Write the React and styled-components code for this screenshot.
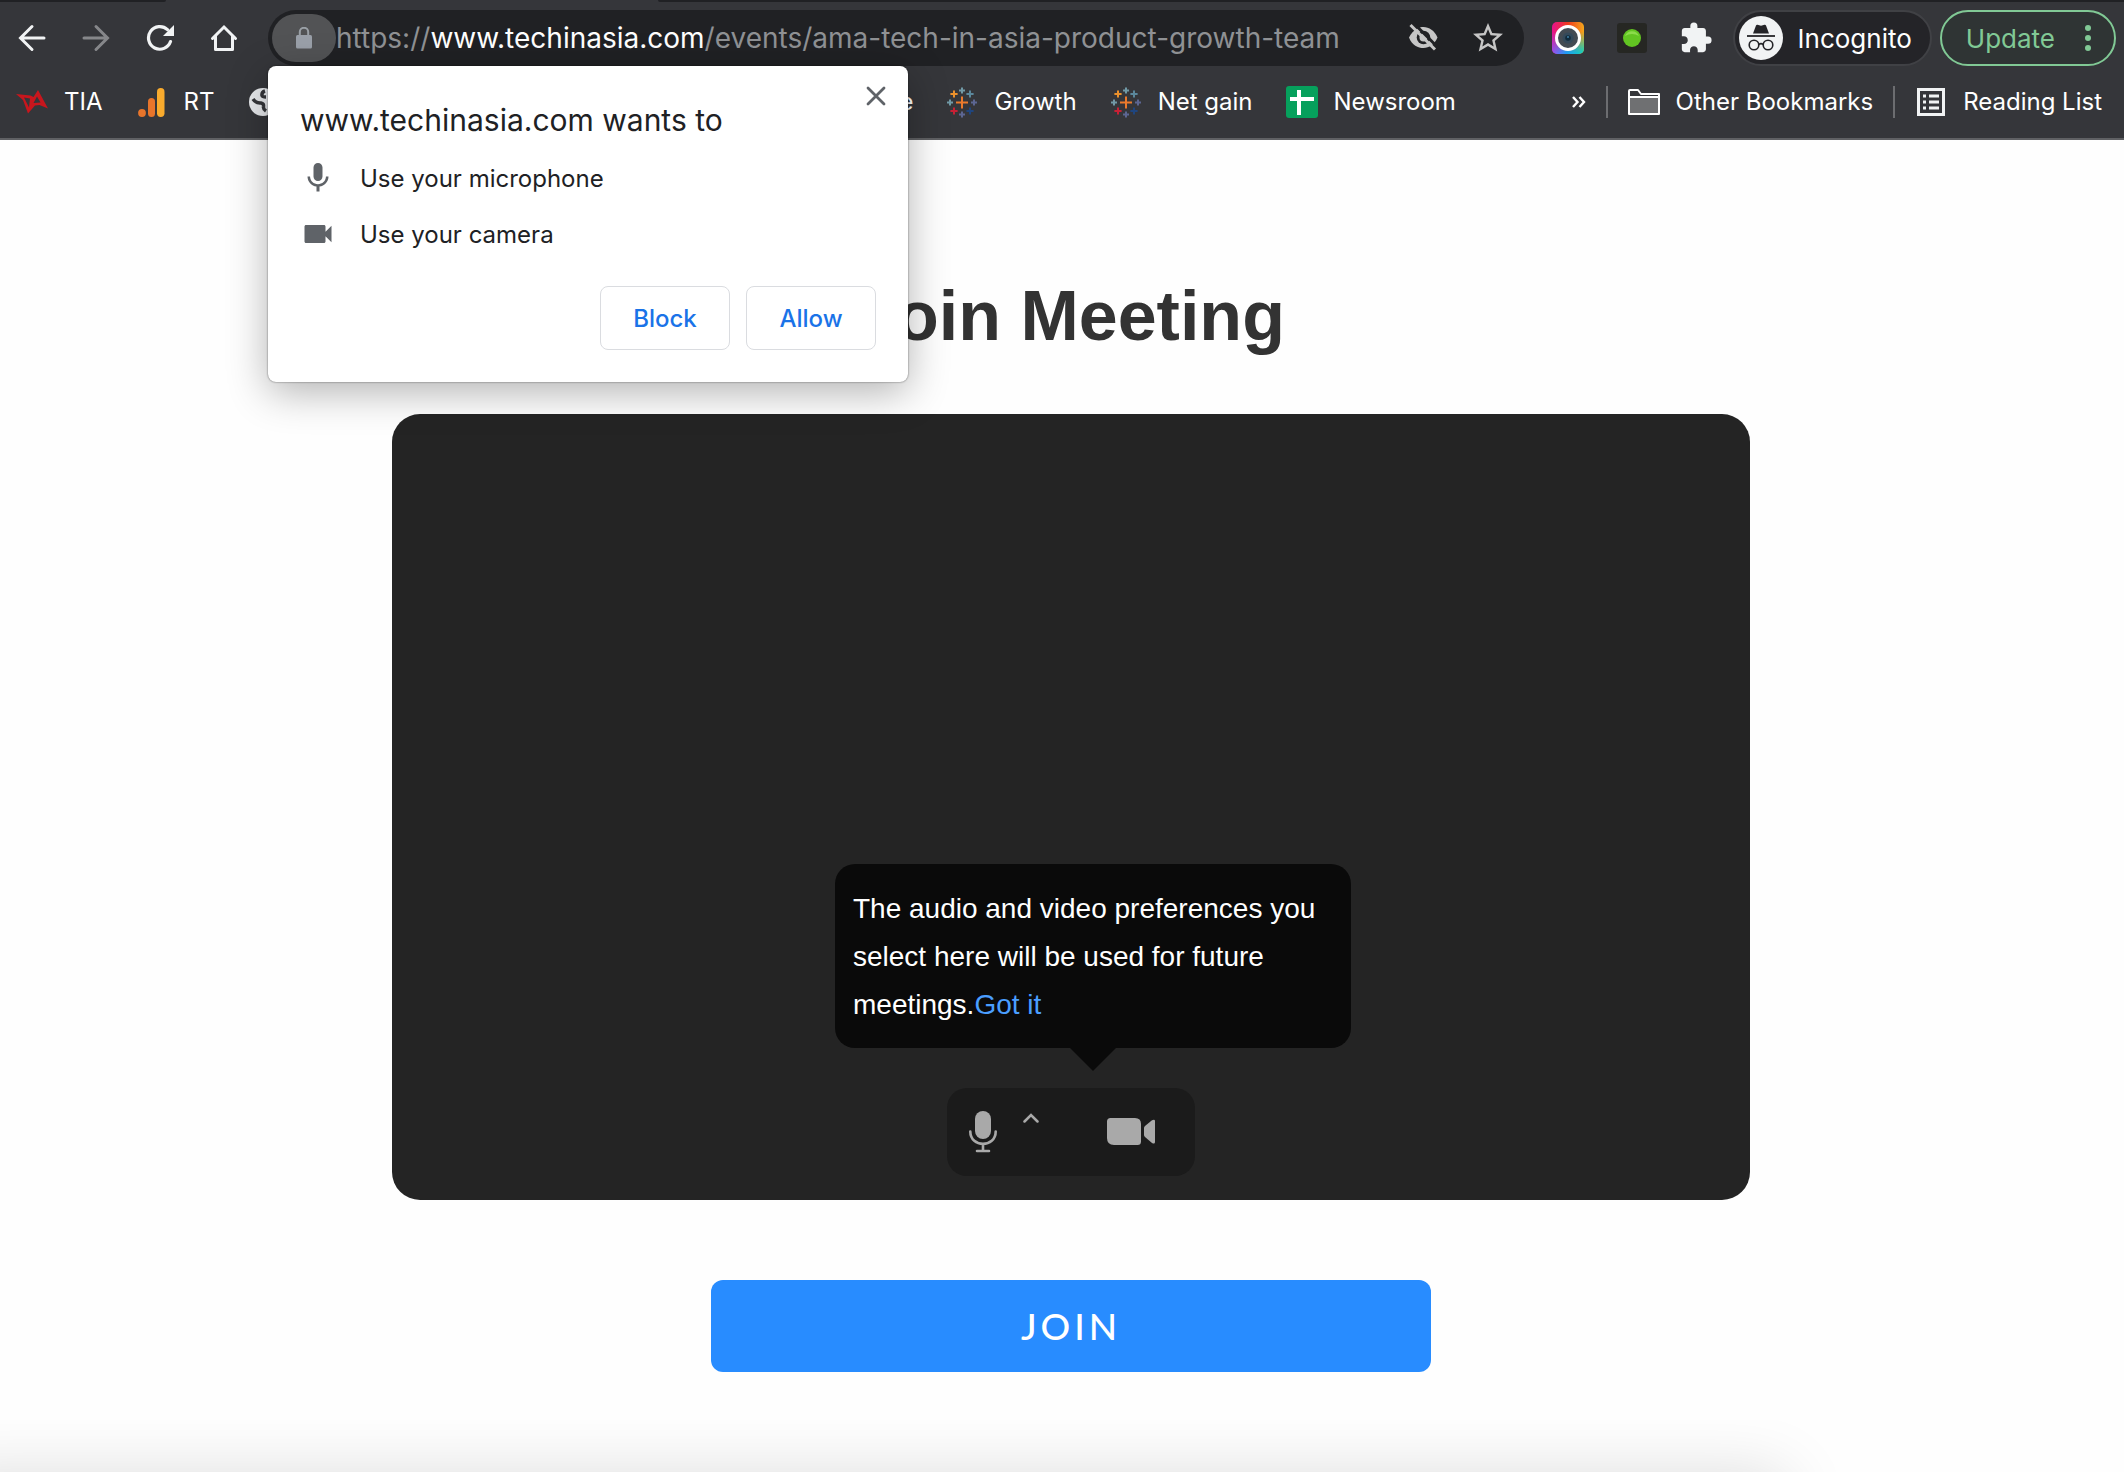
import styled, { createGlobalStyle, css } from "styled-components";
import {
  MdExtension,
  MdMic,
  MdStarOutline,
  MdVideocam,
} from "react-icons/md";

const GlobalStyle = createGlobalStyle`
  * {
    box-sizing: border-box;
  }
  body {
    margin: 0;
    background-color: #fefefe;
    font-family: Inter, "Liberation Sans", sans-serif;
  }
  button {
    font-family: inherit;
    border: 0;
    padding: 0;
    background: none;
    cursor: pointer;
  }
  svg {
    display: block;
    flex-shrink: 0;
  }
`;

const Page = styled.div`
  position: relative;
  display: flex;
  flex-direction: column;
  min-height: 100vh;
`;

// browser header
const Header = styled.header`
  background-color: #35363a;
  border-bottom: 2px solid #606164;
  color: #fff;
`;

const TabStrip = styled.div`
  display: flex;
  justify-content: space-between;
  height: 2px;
`;

const TabEdge = styled.span`
  width: ${(props) => props.$width};
  background-color: #202124;
  border-radius: ${(props) => props.$radius};
`;

const Toolbar = styled.div`
  display: flex;
  align-items: center;
  height: 72px;
  padding-right: 8px;
`;

const ToolButton = styled.button`
  display: flex;
  flex-shrink: 0;
  align-items: center;
  justify-content: center;
  width: 64px;
  height: 56px;
  color: ${(props) => props.$color || "#f1f3f4"};
`;

const NavButtons = styled.nav`
  display: flex;
  margin-right: 12px;
`;

const AddressBar = styled.div`
  display: flex;
  flex: 1;
  align-items: center;
  min-width: 0;
  height: 56px;
  padding: 0 4px;
  border-radius: 28px;
  background-color: #202124;
`;

const LockChip = styled.button`
  display: flex;
  flex-shrink: 0;
  align-items: center;
  justify-content: center;
  width: 64px;
  height: 48px;
  border-radius: 24px;
  background-color: #525355;
`;

const Url = styled.div`
  flex: 1;
  overflow: hidden;
  font-size: 28px;
  line-height: 40px;
  white-space: nowrap;
  color: #8f9194;
`;

const Domain = styled.span`
  color: #fff;
`;

const Extensions = styled.div`
  display: flex;
  margin: 0 5px 0 12px;
`;

const pill = css`
  display: flex;
  flex-shrink: 0;
  align-items: center;
  height: 56px;
  border-radius: 28px;
  font-size: 26px;
`;

const Incognito = styled.button`
  ${pill}
  gap: 15px;
  margin-right: 8px;
  padding: 0 18px 0 4px;
  border: 2px solid #404145;
  background-color: #242428;
  color: #fff;
`;

const Update = styled.button`
  ${pill}
  gap: 30px;
  padding: 0 23px 0 24px;
  border: 2px solid #81c995;
  background-color: #2f3434;
  color: #81c995;
`;

// bookmarks
const Bookmarks = styled.nav`
  display: flex;
  align-items: center;
  gap: 33px;
  height: 64px;
  padding: 0 22px 8px 16px;
`;

const Bookmark = styled.a`
  display: flex;
  flex-shrink: 0;
  align-items: center;
  justify-content: space-between;
  gap: 16px;
  width: ${(props) => props.$width || "auto"};
  font-size: 24px;
  line-height: 32px;
  white-space: nowrap;
  color: #fff;
  text-decoration: none;
`;

const BookmarkIcon = styled.span`
  display: flex;
  justify-content: center;
  width: 32px;
`;

const BookmarksEnd = styled.div`
  display: flex;
  align-items: center;
  gap: 20px;
  margin-left: auto;
`;

const Divider = styled.span`
  width: 2px;
  height: 32px;
  background-color: #6c6d70;
`;

const MoreButton = styled.button`
  display: flex;
`;

// permission dialog, it hangs from the lock chip
const Permission = styled.section`
  position: absolute;
  top: 66px;
  left: 268px;
  z-index: 2;
  display: flex;
  flex-direction: column;
  width: 640px;
  padding: 32px;
  border-radius: 8px;
  background-color: #fff;
  color: #202124;
  box-shadow: 0 0 2px rgba(0, 0, 0, 0.6), 0 10px 40px rgba(0, 0, 0, 0.3);
`;

const CloseButton = styled.button`
  position: absolute;
  top: 15px;
  right: 17px;
  display: flex;
  padding: 5px;
`;

const PermissionTitle = styled.h2`
  margin: 0 0 8px;
  font-size: 30px;
  font-weight: 400;
  line-height: 44px;
`;

const PermissionList = styled.ul`
  margin: 0 0 24px;
  padding: 0;
  list-style: none;
`;

const PermissionItem = styled.li`
  display: flex;
  align-items: center;
  gap: 24px;
  height: 56px;
  font-size: 24px;
  color: #202124;

  svg {
    color: #5f6368;
  }
`;

const PermissionActions = styled.div`
  display: flex;
  justify-content: flex-end;
  gap: 16px;
`;

const DialogButton = styled.button`
  width: 130px;
  height: 64px;
  border: 1px solid #dadce0;
  border-radius: 8px;
  font-size: 24px;
  font-weight: 500;
  color: #1a73e8;
`;

// meeting preview
const Main = styled.main`
  display: flex;
  flex: 1;
  flex-direction: column;
  align-items: center;
  padding: 130px 0 48px 18px;
`;

const Title = styled.h1`
  margin: 0 0 52px;
  font-family: "Liberation Sans", Arial, sans-serif;
  font-size: 70px;
  line-height: 92px;
  color: #333;
`;

const Preview = styled.section`
  display: flex;
  align-items: flex-end;
  justify-content: center;
  width: 64.5%;
  aspect-ratio: 1358 / 786;
  margin-bottom: 80px;
  padding-bottom: 24px;
  border-radius: 28px;
  background-color: #242424;
`;

const Controls = styled.div`
  position: relative;
  display: flex;
  align-items: center;
  width: 248px;
  height: 88px;
  padding: 0 40px 0 18px;
  border-radius: 20px;
  background-color: #1b1b1b;
`;

const ControlButton = styled.button`
  display: flex;
  margin-left: ${(props) => (props.$end ? "auto" : "0")};
  padding: ${(props) => props.$padding || "0"};
`;

const Tooltip = styled.p`
  position: absolute;
  bottom: 128px;
  left: -112px;
  width: 516px;
  margin: 0;
  padding: 21px 18px 19px;
  border-radius: 20px;
  background-color: #0a0a0a;
  font-family: "Liberation Sans", Arial, sans-serif;
  font-size: 28px;
  line-height: 48px;
  color: #fff;

  &::after {
    content: "";
    position: absolute;
    top: 100%;
    left: 50%;
    margin-left: -23px;
    border: 23px solid transparent;
    border-top-color: #0a0a0a;
    border-bottom-width: 0;
  }
`;

const GotIt = styled.a`
  color: #4a9eff;
  text-decoration: none;
`;

const JoinButton = styled.button`
  width: 720px;
  max-width: 100%;
  height: 92px;
  padding-bottom: 2px;
  border-radius: 12px;
  background-color: #288cff;
  font-family: Lato, sans-serif;
  font-size: 37px;
  font-weight: 500;
  letter-spacing: 4px;
  color: #fff;
`;

// soft shade along the bottom of the page
const BottomShade = styled.div`
  height: 52px;
  overflow: hidden;

  &::before {
    content: "";
    display: block;
    width: 87%;
    height: 80px;
    margin: 52px 0 0 -60px;
    border-radius: 16px;
    box-shadow: 0 0 64px rgba(0, 0, 0, 0.13);
  }
`;

function ArrowIcon({ forward }) {
  return (
    <svg width="28" height="28" viewBox="0 0 28 28" fill="none">
      <path
        d={forward ? "M2 14H25M14 2.5L25.5 14L14 25.5" : "M26 14H3M14 2.5L2.5 14L14 25.5"}
        stroke="currentColor"
        strokeWidth="3"
        strokeLinecap="round"
      />
    </svg>
  );
}

function ReloadIcon() {
  return (
    <svg width="28" height="28" viewBox="0 0 28 28" fill="none">
      <path
        d="M21.5 5.6A11.3 11.3 0 1 0 24.5 17.6"
        stroke="currentColor"
        strokeWidth="3.2"
        strokeLinecap="round"
      />
      <path d="M28 1V12H17Z" fill="currentColor" />
    </svg>
  );
}

function HomeIcon() {
  return (
    <svg width="28" height="28" viewBox="0 0 28 28" fill="none" stroke="currentColor" strokeWidth="3" strokeLinejoin="round" strokeLinecap="round">
      <path d="M2.5 14.5L14 3L25.5 14.5" strokeLinejoin="miter" />
      <path d="M5.5 12.5V25.5H22.5V12.5" />
    </svg>
  );
}

function LockIcon() {
  return (
    <svg width="16" height="22" viewBox="0 0 16 22">
      <path d="M3.8 9V5A4.2 4.2 0 0 1 12.2 5V9" fill="none" stroke="#9aa0a6" strokeWidth="2" />
      <rect y="8" width="16" height="13.5" rx="1.5" fill="#9aa0a9" />
    </svg>
  );
}

function EyeOffIcon() {
  return (
    <svg width="32" height="32" viewBox="0 0 32 32" fill="none">
      <path d="M1 15.5C5 7.5 11 5 15.5 5C21 5 26.5 8.5 29.5 15.5C26.5 22.5 21 26 15.5 26C10 26 4 23.5 1 15.5Z" fill="#c6c6c6" />
      <circle cx="15.5" cy="15.5" r="6.8" fill="#202124" />
      <circle cx="15.5" cy="15.5" r="4" fill="#c6c6c6" />
      <path d="M5.5 1L31 26.5" stroke="#202124" strokeWidth="3" />
      <path d="M2.5 3L27 27.5" stroke="#c6c6c6" strokeWidth="3" />
    </svg>
  );
}

function LensIcon() {
  return (
    <svg width="32" height="32" viewBox="0 0 32 32">
      <defs>
        <linearGradient id="lensTop" x1="0" x2="1">
          <stop offset="0" stopColor="#e8128f" />
          <stop offset="0.5" stopColor="#f03a1c" />
          <stop offset="1" stopColor="#f5a81c" />
        </linearGradient>
        <linearGradient id="lensBottom" x1="0" x2="1">
          <stop offset="0" stopColor="#9a4ff0" />
          <stop offset="0.45" stopColor="#1e9cf5" />
          <stop offset="1" stopColor="#16d3b5" />
        </linearGradient>
        <linearGradient id="lensFade" x1="0" y1="0" x2="0" y2="1">
          <stop offset="0.3" stopColor="#000" />
          <stop offset="0.95" stopColor="#fff" />
        </linearGradient>
        <mask id="lensMask">
          <rect width="32" height="32" fill="url(#lensFade)" />
        </mask>
      </defs>
      <rect width="32" height="32" rx="5" fill="url(#lensTop)" />
      <rect width="32" height="32" rx="5" fill="url(#lensBottom)" mask="url(#lensMask)" />
      <circle cx="16" cy="16" r="11.5" fill="#434b53" stroke="#fff" strokeWidth="3" />
      <circle cx="16" cy="16" r="5.5" fill="#34495a" />
      <circle cx="16" cy="16" r="2.8" fill="#102b3c" />
      <circle cx="16" cy="15" r="1" fill="#3f7fa5" />
    </svg>
  );
}

function RecordIcon() {
  return (
    <svg width="32" height="32" viewBox="0 0 32 32">
      <rect x="1" y="1" width="30" height="30" rx="3" fill="#262723" />
      <circle cx="16" cy="16" r="9" fill="#62c522" />
      <path d="M9 14A7.5 7.5 0 0 1 23 14Q16 10 9 14Z" fill="#8bdc4a" />
    </svg>
  );
}

function IncognitoIcon() {
  return (
    <svg width="44" height="44" viewBox="0 0 44 44">
      <circle cx="22" cy="22" r="22" fill="#f1f3f4" />
      <path d="M14 17.5L17 9.5Q17.5 8.5 18.5 8.8L22 9.8L25.5 8.8Q26.5 8.5 27 9.5L30 17.5Z" fill="#242428" />
      <path d="M8 20H36" stroke="#242428" strokeWidth="1.8" />
      <g fill="none" stroke="#242428" strokeWidth="1.6">
        <circle cx="15" cy="29" r="4.8" />
        <circle cx="29" cy="29" r="4.8" />
        <path d="M19.8 28.5Q22 26.8 24.2 28.5" />
      </g>
    </svg>
  );
}

function DotsIcon() {
  return (
    <svg width="6" height="28" viewBox="0 0 6 28" fill="currentColor">
      <circle cx="3" cy="4" r="3" />
      <circle cx="3" cy="14" r="3" />
      <circle cx="3" cy="24" r="3" />
    </svg>
  );
}

function TiaIcon() {
  return (
    <svg width="32" height="24" viewBox="0 0 32 24" fill="#c8161d">
      <path fillRule="evenodd" d="M0 4L14.5 5.5L17.5 7L22 0L32 18.5L23.5 15L19 15.5L12 23.5L7 10ZM8 7.5L13 17.5L14 8.5ZM21 6.5L17.5 13L24.5 12.5Z" />
    </svg>
  );
}

function AnalyticsIcon() {
  return (
    <svg width="28" height="30" viewBox="0 0 28 30">
      <rect x="19" y="1" width="7.500" height="29" rx="3.700" fill="#f9ab2d" />
      <rect x="10" y="11" width="7" height="19" rx="3.500" fill="#e8752b" />
      <circle cx="4" cy="26" r="3.900" fill="#e8752b" />
    </svg>
  );
}

function GlobeIcon() {
  return (
    <svg width="28" height="28" viewBox="0 0 28 28">
      <circle cx="14" cy="14" r="14" fill="#e8eaed" />
      <path
        d="M4 11Q7 15.5 12 15Q15 15.5 14.5 18.5Q14 21 17 23M16 3Q12.5 4 13 7.5Q13.5 9 17 9"
        fill="none"
        stroke="#35363a"
        strokeWidth="3.5"
      />
    </svg>
  );
}

const tableauMarks = [
  { x: 15, y: 3.5, r: 3, color: "#7199a6" },
  { x: 23, y: 7, r: 3.6, color: "#5b879b" },
  { x: 27, y: 15.5, r: 3, color: "#5c6692" },
  { x: 23, y: 24, r: 3.6, color: "#1f457e" },
  { x: 15, y: 27.5, r: 3, color: "#5c6692" },
  { x: 7, y: 24, r: 3.6, color: "#c72035" },
  { x: 3, y: 15.5, r: 3, color: "#7199a6" },
  { x: 7, y: 7, r: 3.6, color: "#eb912c" },
  { x: 15, y: 15.5, r: 6, color: "#eb7a2c" },
];

function TableauIcon() {
  return (
    <svg width="30" height="31" viewBox="0 0 30 31">
      {tableauMarks.map(({ x, y, r, color }) => (
        <path
          key={`${x}-${y}`}
          d={`M${x - r} ${y}H${x + r}M${x} ${y - r}V${y + r}`}
          stroke={color}
          strokeWidth="2"
        />
      ))}
    </svg>
  );
}

function SheetsIcon() {
  return (
    <svg width="32" height="32" viewBox="0 0 32 32">
      <rect width="32" height="32" rx="3" fill="#06a05c" />
      <path d="M4 13H28M13 4V29" stroke="#fff" strokeWidth="4" />
    </svg>
  );
}

function FolderIcon() {
  return (
    <svg width="32" height="26" viewBox="0 0 32 26">
      <path d="M1 2Q1 1 2 1H10L13 5H31V25H1Z" fill="none" stroke="#fff" strokeWidth="2" strokeLinejoin="round" />
      <path d="M2 8H30V24H2Z" fill="#6f7072" />
      <path d="M1 8H31" stroke="#fff" strokeWidth="2" />
    </svg>
  );
}

function ReadingListIcon() {
  return (
    <svg width="28" height="28" viewBox="0 0 28 28" fill="none" stroke="#f1f3f4">
      <rect x="1.5" y="1.5" width="25" height="25" strokeWidth="3" />
      <path d="M6 8H9M6 14H9M6 20H9M12 8H22M12 14H22M12 20H22" strokeWidth="2.8" />
    </svg>
  );
}

function ChevronsIcon() {
  return (
    <svg width="14" height="12" viewBox="0 0 14 12" fill="none" stroke="#fff" strokeWidth="2.4">
      <path d="M1 1L5.5 6L1 11M7.5 1L12 6L7.5 11" />
    </svg>
  );
}

function CloseIcon() {
  return (
    <svg width="20" height="20" viewBox="0 0 20 20">
      <path d="M2 2L18 18M18 2L2 18" stroke="#5f6368" strokeWidth="2.8" strokeLinecap="round" />
    </svg>
  );
}

function StageMicIcon() {
  return (
    <svg width="28" height="42" viewBox="0 0 28 42" fill="none" stroke="#a9a9a9" strokeWidth="2.6" strokeLinecap="round">
      <rect x="6" y="0" width="16" height="28" rx="8" fill="#a9a9a9" stroke="none" />
      <path d="M1.3 20.5C1.3 37 26.7 37 26.7 20.5M14 33V39M8 40H20" />
    </svg>
  );
}

function StageCameraIcon() {
  return (
    <svg width="48" height="28" viewBox="0 0 48 28" fill="#a9a9a9">
      <path d="M3.5 0H28Q34 0 34 6V23.5Q34 27 30.5 27H7Q0 27 0 20V3.5Q0 0 3.5 0Z" />
      <path d="M37 10Q37 9 38 8L45 2.2Q48 1 48 3V24Q48 26.5 45 25L38 19Q37 18 37 17Z" />
    </svg>
  );
}

function ChevronUpIcon() {
  return (
    <svg width="16" height="10" viewBox="0 0 16 10">
      <path d="M1.5 8.5L8 2L14.5 8.5" fill="none" stroke="#a9a9a9" strokeWidth="2.5" strokeLinecap="round" />
    </svg>
  );
}

function App() {
  return (
    <Page>
      <GlobalStyle />
      <Header>
        <TabStrip>
          <TabEdge $width="166px" $radius="0 0 8px 0" />
          <TabEdge $width="69%" $radius="0 0 0 8px" />
        </TabStrip>
        <Toolbar>
          <NavButtons aria-label="Navigation">
            <ToolButton aria-label="Back"><ArrowIcon /></ToolButton>
            <ToolButton aria-label="Forward" $color="#86878a"><ArrowIcon forward /></ToolButton>
            <ToolButton aria-label="Reload"><ReloadIcon /></ToolButton>
            <ToolButton aria-label="Home"><HomeIcon /></ToolButton>
          </NavButtons>
          <AddressBar>
            <LockChip aria-label="Site information"><LockIcon /></LockChip>
            <Url>
              https://<Domain>www.techinasia.com</Domain>/events/ama-tech-in-asia-product-growth-team
            </Url>
            <ToolButton aria-label="Third-party cookies blocked"><EyeOffIcon /></ToolButton>
            <ToolButton aria-label="Bookmark this page" $color="#c6c6c6"><MdStarOutline size={36} /></ToolButton>
          </AddressBar>
          <Extensions>
            <ToolButton aria-label="Lens"><LensIcon /></ToolButton>
            <ToolButton aria-label="Recorder"><RecordIcon /></ToolButton>
            <ToolButton aria-label="Extensions"><MdExtension size={34} /></ToolButton>
          </Extensions>
          <Incognito>
            <IncognitoIcon />
            Incognito
          </Incognito>
          <Update>
            Update
            <DotsIcon />
          </Update>
        </Toolbar>
        <Bookmarks aria-label="Bookmarks">
          <Bookmark href="#tia">
            <BookmarkIcon><TiaIcon /></BookmarkIcon>
            TIA
          </Bookmark>
          <Bookmark href="#rt">
            <BookmarkIcon><AnalyticsIcon /></BookmarkIcon>
            RT
          </Bookmark>
          <Bookmark href="#site" $width="666px">
            <BookmarkIcon><GlobeIcon /></BookmarkIcon>
            e
          </Bookmark>
          <Bookmark href="#growth">
            <BookmarkIcon><TableauIcon /></BookmarkIcon>
            Growth
          </Bookmark>
          <Bookmark href="#net-gain">
            <BookmarkIcon><TableauIcon /></BookmarkIcon>
            Net gain
          </Bookmark>
          <Bookmark href="#newsroom">
            <BookmarkIcon><SheetsIcon /></BookmarkIcon>
            Newsroom
          </Bookmark>
          <BookmarksEnd>
            <MoreButton aria-label="More bookmarks"><ChevronsIcon /></MoreButton>
            <Divider />
            <Bookmark href="#other">
              <BookmarkIcon><FolderIcon /></BookmarkIcon>
              Other Bookmarks
            </Bookmark>
            <Divider />
            <Bookmark href="#reading">
              <BookmarkIcon><ReadingListIcon /></BookmarkIcon>
              Reading List
            </Bookmark>
          </BookmarksEnd>
        </Bookmarks>
      </Header>

      <Permission role="dialog" aria-labelledby="permission-title">
        <CloseButton aria-label="Close"><CloseIcon /></CloseButton>
        <PermissionTitle id="permission-title">www.techinasia.com wants to</PermissionTitle>
        <PermissionList>
          <PermissionItem>
            <MdMic size={36} />
            Use your microphone
          </PermissionItem>
          <PermissionItem>
            <MdVideocam size={36} />
            Use your camera
          </PermissionItem>
        </PermissionList>
        <PermissionActions>
          <DialogButton>Block</DialogButton>
          <DialogButton>Allow</DialogButton>
        </PermissionActions>
      </Permission>

      <Main>
        <Title>Join Meeting</Title>
        <Preview aria-label="Video preview">
          <Controls>
            <Tooltip role="tooltip">
              The audio and video preferences you select here will be used for
              future meetings.<GotIt href="#got-it">Got it</GotIt>
            </Tooltip>
            <ControlButton aria-label="Microphone" $padding="0 4px"><StageMicIcon /></ControlButton>
            <ControlButton aria-label="Audio options" $padding="0 22px 28px"><ChevronUpIcon /></ControlButton>
            <ControlButton aria-label="Camera" $end><StageCameraIcon /></ControlButton>
          </Controls>
        </Preview>
        <JoinButton>JOIN</JoinButton>
      </Main>
      <BottomShade />
    </Page>
  );
}

export default App;
